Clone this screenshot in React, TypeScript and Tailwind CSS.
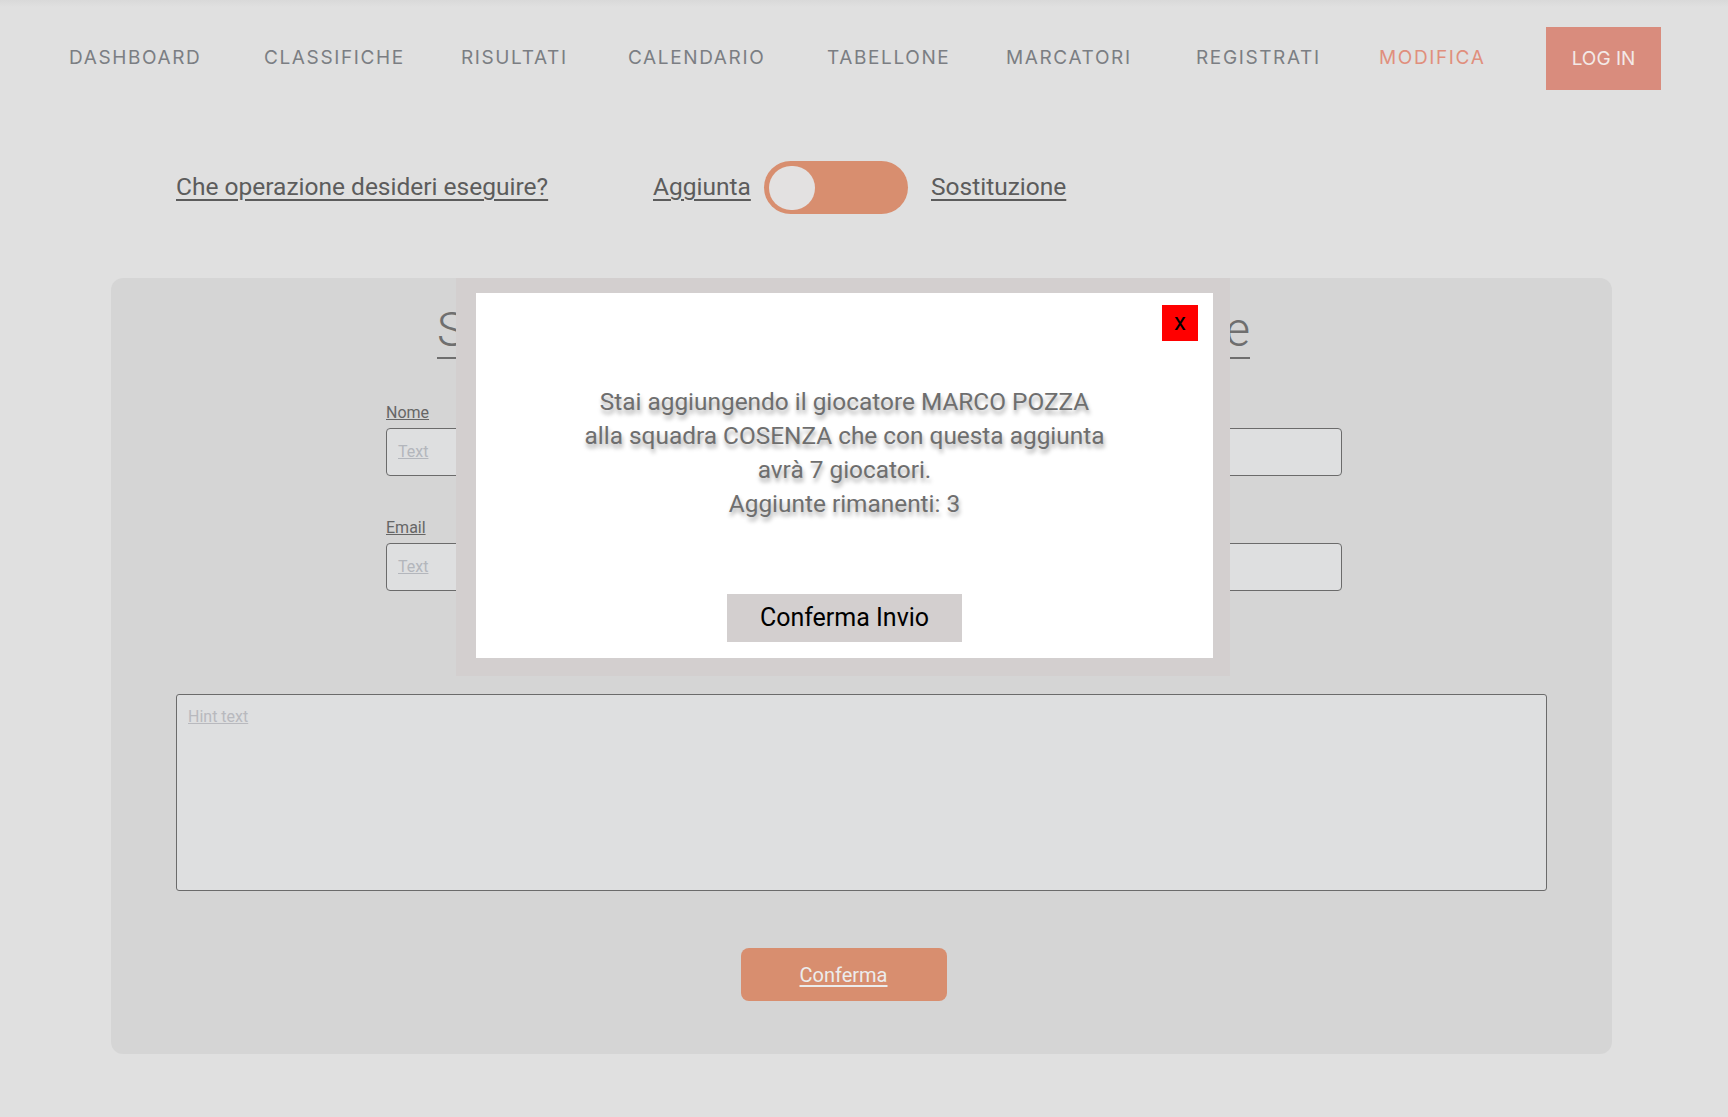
import React from 'react'

// nav items with the slot width each one takes in the bar
const NAV: { label: string; w: string; active?: boolean }[] = [
  { label: 'DASHBOARD', w: 'w-[195px]' },
  { label: 'CLASSIFICHE', w: 'w-[197px]' },
  { label: 'RISULTATI', w: 'w-[167px]' },
  { label: 'CALENDARIO', w: 'w-[199px]' },
  { label: 'TABELLONE', w: 'w-[179px]' },
  { label: 'MARCATORI', w: 'w-[190px]' },
  { label: 'REGISTRATI', w: 'w-[183px]' },
  { label: 'MODIFICA', w: 'w-[167px]', active: true },
]

function Field({ label }: { label: string }) {
  return (
    <div className="flex flex-col">
      <span className="text-[16px] leading-[22px] text-[#666] underline mb-[4px]">{label}</span>
      <div className="h-[48px] rounded-[4px] border border-[#6b6b6b] bg-[#dedfe0] flex items-center px-[11px]">
        <span className="text-[16px] text-[#b3b6bc] underline">Text</span>
      </div>
    </div>
  )
}

function ConfirmModal() {
  return (
    <div className="absolute left-[456px] top-[278px] w-[774px] h-[398px] bg-[#d3cfcf] pl-[20px] pr-[17px] pt-[15px] pb-[18px]">
      <div className="relative h-full bg-white flex flex-col items-center">
        <button className="absolute right-[15px] top-[12px] w-[36px] h-[36px] bg-[#ff0000] text-black text-[24px] leading-none flex items-center justify-center pb-[3px]">
          x
        </button>
        <div className="mt-[92px] text-center text-[24.4px] leading-[34px] text-[#6e6e6e] [text-shadow:1px_4px_4px_rgba(0,0,0,0.35)]">
          <p>Stai aggiungendo il giocatore MARCO POZZA</p>
          <p>alla squadra COSENZA che con questa aggiunta</p>
          <p>avrà 7 giocatori.</p>
          <p>Aggiunte rimanenti: 3</p>
        </div>
        <button className="mt-[73px] w-[235px] h-[48px] bg-[#d3cfcf] text-black text-[25px]">
          Conferma Invio
        </button>
      </div>
    </div>
  )
}

export default function App() {
  return (
    <div className="relative min-h-screen bg-[#e0e0e0] font-['Roboto','Liberation_Sans',sans-serif] overflow-hidden">
      {/* top shadow */}
      <div className="h-[7px] bg-gradient-to-b from-[#d9d9d9] to-[#e0e0e0]" />

      {/* Nav */}
      <nav className="flex items-center pl-[69px] mt-[20px] h-[63px] font-['Inter',sans-serif]">
        {NAV.map((item) => (
          <span
            key={item.label}
            className={`${item.w} text-[19px] tracking-[0.085em] ${item.active ? 'text-[#e08f7d]' : 'text-[#7b7e83]'}`}
          >
            {item.label}
          </span>
        ))}
        <button className="w-[115px] h-[63px] bg-[#d98c7d] text-[#f3e9e7] text-[19px] pt-[2px]">LOG IN</button>
      </nav>

      {/* Operation switch */}
      <div className="flex items-center mt-[71px] pl-[176px] h-[53px] text-[24.5px] text-[#5c5c5c]">
        <span className="w-[376px] underline underline-offset-[4px] whitespace-nowrap">Che operazione desideri eseguire?</span>
        <span className="ml-[101px] w-[97px] underline underline-offset-[4px]">Aggiunta</span>
        <div className="ml-[14px] w-[144px] h-[53px] rounded-full bg-[#d88e6f] flex items-center pl-[5px]">
          <div className="w-[46px] h-[44px] rounded-full bg-[#e3e1e1]" />
        </div>
        <span className="ml-[23px] underline underline-offset-[4px]">Sostituzione</span>
      </div>

      {/* Card */}
      <div className="ml-[111px] mt-[64px] w-[1501px] h-[776px] rounded-[12px] bg-[#d5d5d5] flex flex-col pt-[24px]">
        <div className="flex justify-center pr-[36px]">
          <h1 className="w-[813px] text-[48px] leading-[56px] font-light text-[#6f6f6f] underline decoration-[2px] underline-offset-[11px] whitespace-nowrap text-justify [text-align-last:justify]">
            Seleziona il giocatore da aggiungere
          </h1>
        </div>

        <div className="ml-[275px] mt-[44px] w-[956px] flex flex-col gap-[41px]">
          <Field label="Nome" />
          <Field label="Email" />
        </div>

        <div className="mx-[65px] mt-[103px] h-[197px] rounded-[3px] border border-[#6b6b6b] bg-[#dedfe0] px-[11px] pt-[10px]">
          <span className="text-[16px] text-[#b8b9be] underline">Hint text</span>
        </div>

        <div className="flex justify-center pr-[36px] mt-[57px]">
          <button className="w-[206px] h-[53px] rounded-[8px] bg-[#d88e6f] text-[20px] text-[#ececec] underline underline-offset-[3px]">
            Conferma
          </button>
        </div>
      </div>

      <ConfirmModal />
    </div>
  )
}
